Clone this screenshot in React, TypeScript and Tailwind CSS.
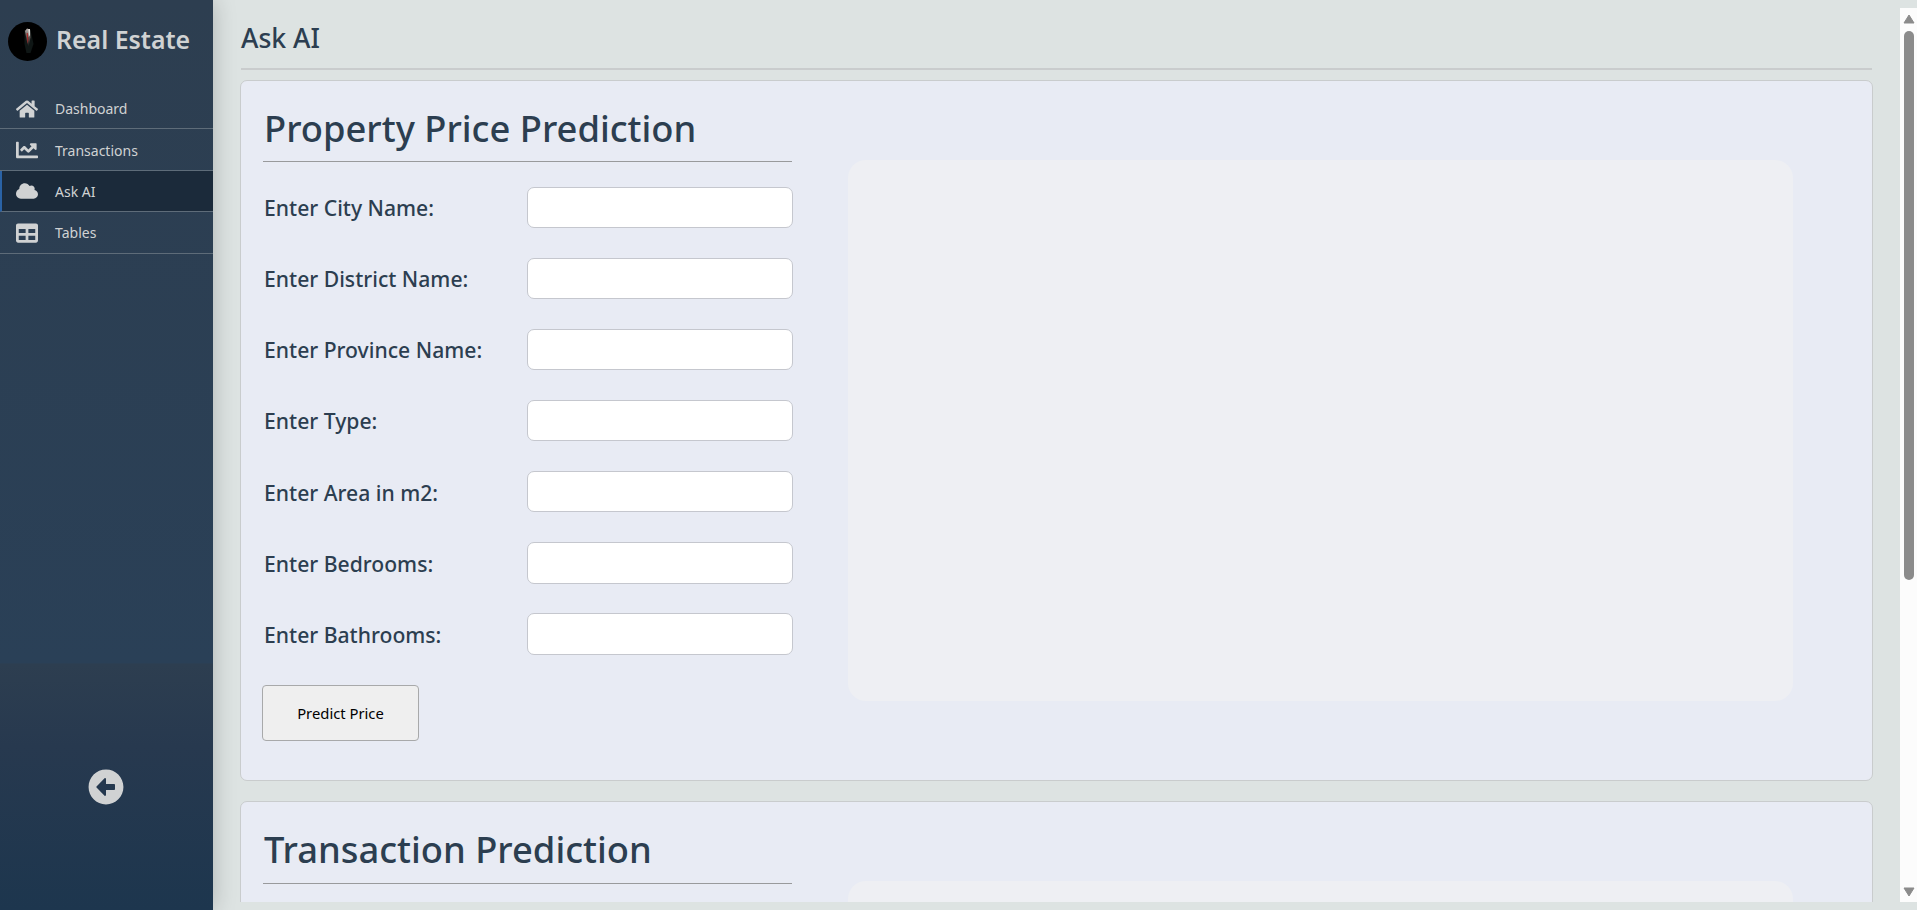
import type { ReactNode } from "react";
import { FaHome, FaChartLine, FaCloud, FaTable, FaArrowAltCircleLeft } from "react-icons/fa";

function NavItem({ icon, label, active = false }: { icon: ReactNode; label: string; active?: boolean }) {
  return (
    <a
      className={
        "flex h-[41.4px] items-center border-b border-[#5e6c79] pr-4 pt-px text-[14px] text-[#d0d2d3] " +
        (active ? "border-l-2 border-l-[#2a62a5] bg-[#1b2a3a] pl-3.5" : "pl-4")
      }
    >
      <span className="w-[39px] shrink-0 text-[22px]">{icon}</span>
      {label}
    </a>
  );
}

const propertyFields = [
  "Enter City Name:",
  "Enter District Name:",
  "Enter Province Name:",
  "Enter Type:",
  "Enter Area in m2:",
  "Enter Bedrooms:",
  "Enter Bathrooms:",
];

function PredictionCard({ title, fields = [], action }: { title: string; fields?: string[]; action?: string }) {
  return (
    <section className="flex h-[701.3px] shrink-0 rounded-[7px] border border-[#c9cccd] bg-[#e8ebf4] pl-[22px] pt-[21px]">
      <div className="w-[530px] shrink-0">
        <h2 className="h-[59.3px] pt-px pl-px text-[36.35px] leading-[50px] font-medium">{title}</h2>
        <hr className="mr-px border-t border-[#999a9c]" />
        <div className="mt-[24.7px] flex flex-col gap-[29.9px]">
          {fields.map((f) => (
            <label key={f} className="flex h-[41.2px] items-center justify-between pl-px text-[21.15px] font-medium">
              <span className="pt-px">{f}</span>
              <input className="h-full w-[266px] rounded-[7px] border border-[#c5c7ce] bg-white px-3 text-base" />
            </label>
          ))}
        </div>
        {action && (
          <button className="mt-[30.5px] -ml-px h-[56px] w-[157px] rounded-[4px] border border-[#a8a9aa] bg-[#efefef] text-[14.8px] text-black">
            {action}
          </button>
        )}
      </div>
      <div className="mt-[58px] ml-[55px] h-[541px] w-[945px] rounded-[18px] bg-[#eeeff3]" />
    </section>
  );
}

export default function App() {
  return (
    <div className="flex h-[910px] w-full overflow-hidden bg-[#dde3e2] font-['Noto_Sans',sans-serif] text-[#2c3e50]">
      <aside className="z-10 flex w-[213px] shrink-0 flex-col bg-[linear-gradient(to_bottom,#2d3e50_0%,#2a4057_72.8%,#2d3e50_73%,#27394f_82%,#1d364e_100%)] shadow-[0_0_22px_rgba(0,0,0,0.22)]">
        <div className="flex h-[88px] items-start gap-[9px] pl-2 pt-[22px] text-[#d0d2d3]">
          <svg width="39" height="39" viewBox="0 0 39 39">
            <defs>
              <linearGradient id="beam" x1="0" y1="0" x2="0" y2="1">
                <stop offset="0" stopColor="#b8b0ac" />
                <stop offset="0.45" stopColor="#5d5350" />
                <stop offset="1" stopColor="#0a0f0e" />
              </linearGradient>
            </defs>
            <circle cx="19.5" cy="19.5" r="19.5" fill="#000" />
            <path d="M16.5 8h6l3 14-3 9h-4l-2-9z" fill="#0f1615" />
            <path d="M17 9l2-2.5 3 1 .5 8-2 10-2-8z" fill="url(#beam)" />
            <path d="M20.5 7h1.3v6l-1 2z" fill="#f1eeea" />
            <path d="M18.6 11h1.2l.6 7-.8 4z" fill="#a52a2a" />
          </svg>
          <span className="text-[24.9px] leading-[34px] font-semibold">Real Estate</span>
        </div>
        <nav className="flex flex-col">
          <NavItem icon={<FaHome />} label="Dashboard" />
          <NavItem icon={<FaChartLine />} label="Transactions" />
          <NavItem icon={<FaCloud />} label="Ask AI" active />
          <NavItem icon={<FaTable />} label="Tables" />
        </nav>
        <button className="mt-auto mr-0.5 mb-[105px] self-center text-[36px] text-[#d0d2d3]">
          <FaArrowAltCircleLeft />
        </button>
      </aside>
      <main className="my-2 flex flex-1 overflow-hidden">
        <div className="flex-1 overflow-hidden px-[27px]">
          <header className="mx-px h-[62px] border-b-2 border-[#c9cccd] pt-[10px] text-[26.6px] leading-[40px] font-medium">
            Ask AI
          </header>
          <div className="mt-[10px] flex flex-col gap-5">
            <PredictionCard title="Property Price Prediction" fields={propertyFields} action="Predict Price" />
            <PredictionCard title="Transaction Prediction" />
          </div>
        </div>
        <div className="flex w-[17px] shrink-0 flex-col items-center bg-[#fcfcfc]">
          <svg className="mt-1.5 ml-px shrink-0" width="12" height="10" viewBox="0 0 12 10">
            <path d="M6 1L11 9H1z" fill="#8b8b8b" stroke="#8b8b8b" strokeLinejoin="round" />
          </svg>
          <div className="mt-[7px] ml-px h-[549px] w-[10px] rounded-full bg-[#8b8b8b]" />
          <svg className="mt-auto mb-[5px] ml-px shrink-0" width="12" height="10" viewBox="0 0 12 10">
            <path d="M1 1H11L6 9z" fill="#8b8b8b" stroke="#8b8b8b" strokeLinejoin="round" />
          </svg>
        </div>
      </main>
    </div>
  );
}
